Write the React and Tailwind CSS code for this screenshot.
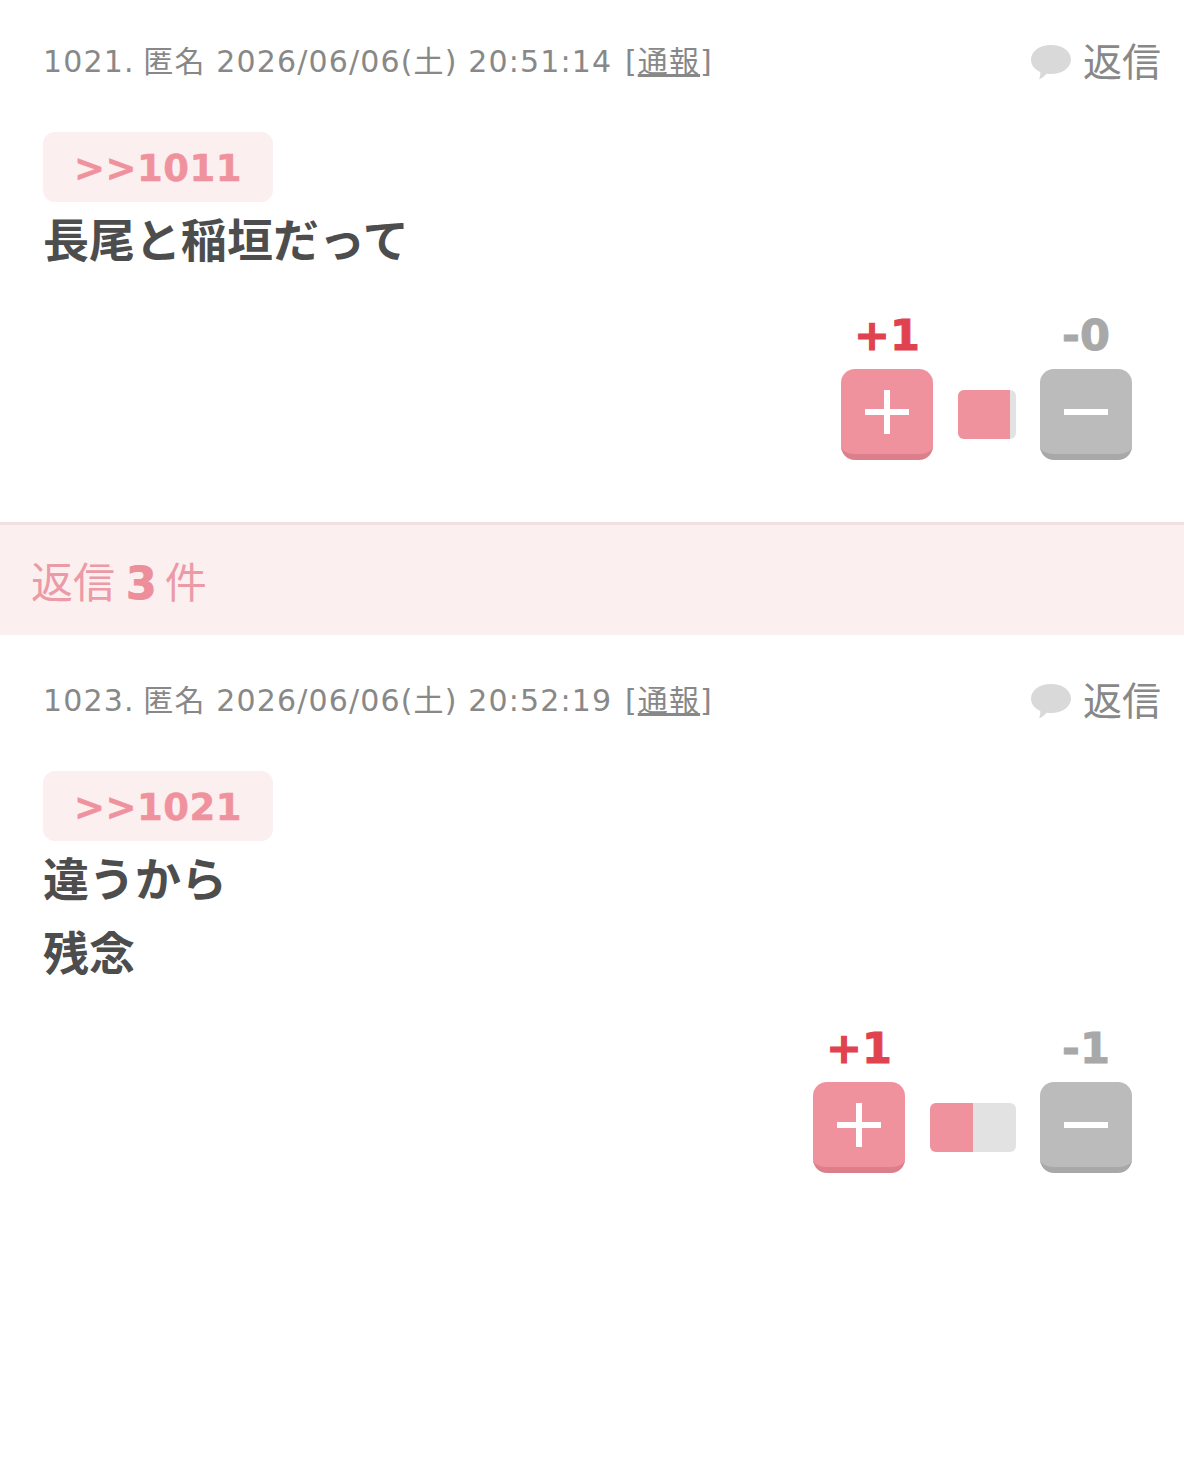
import React from 'react';

const font = { fontFamily: '"DejaVu Sans", "Noto Sans CJK JP", sans-serif' };

function Bubble() {
  return (
    <svg width="40" height="35" viewBox="0 0 40 35" className="shrink-0">
      <path d="M20 0C31 0 40 6 40 14.500C40 23 31 29 20 29C18.500 29 17 28.900 15.500 28.700C14 30.500 11.500 33 8 34.500C9 32 9.500 29.500 9.300 27C3.700 24.500 0 20 0 14.500C0 6 9 0 20 0Z" fill="#d9d9d9" />
    </svg>
  );
}

function VoteButton({ count, type }) {
  const plus = type === 'plus';
  return (
    <div className="flex flex-col items-center w-[92px]">
      <div className={`h-[48px] pb-[20px] flex items-center text-[43px] font-bold leading-none [-webkit-text-stroke:1px_currentColor] ${plus ? 'text-[#e0424f]' : 'text-[#a8a8a8]'}`}>
        {count}
      </div>
      <div className={`flex items-center justify-center w-[92px] h-[91px] rounded-[14px] border-b-[6px] ${plus ? 'bg-[#f0929d] border-[#dc7f8a]' : 'bg-[#bbbbbb] border-[#a8a8a8]'}`}>
        {plus ? (
          <svg width="44" height="44" viewBox="0 0 44 44"><path d="M19 0h6v19h19v6H25v19h-6V25H0v-6h19z" fill="#fff" /></svg>
        ) : (
          <svg width="44" height="44" viewBox="0 0 44 44"><path d="M0 19h44v6H0z" fill="#fff" /></svg>
        )}
      </div>
    </div>
  );
}

function Post({ no, date, anchor, lines, plus, minus, barWidth, fillWidth }) {
  return (
    <div className="pl-[44px] pr-[23px]">
      <div className="flex items-center justify-between h-[60px] text-[#888888]">
        <div className="-ml-[1px] text-[30px] tracking-[1.150px] leading-none whitespace-nowrap">
          <span className="-mr-[2px]">{no}.</span> 匿名 {date} <span className="ml-[2px]">[<span className="underline">通報</span>]</span>
        </div>
        <div className="flex items-center gap-[12px]">
          <Bubble />
          <span className="text-[39px] leading-none">返信</span>
        </div>
      </div>
      <div className="mt-[40px] -ml-[1px] pt-[3px] flex items-center justify-center w-[230px] h-[70px] rounded-[12px] bg-[#fbeff0] text-[#f0929d] text-[37px] font-bold tracking-[0.500px] leading-none [-webkit-text-stroke:0.5px_currentColor]">
        {anchor}
      </div>
      <div className="mt-[2px] -ml-[1px] text-[#4d4d4d] text-[46px] font-bold leading-[74px]">
        {lines.map((line) => (
          <div key={line}>{line}</div>
        ))}
      </div>
      <div className="flex justify-end items-end pr-[29px] mt-[43px]">
        <VoteButton count={plus} type="plus" />
        <div className="flex overflow-hidden h-[49px] rounded-[6px] bg-[#e2e2e2] ml-[25px] mr-[24px] mb-[21px]" style={{ width: barWidth }}>
          <div className="h-full bg-[#f0929d]" style={{ width: fillWidth }} />
        </div>
        <VoteButton count={minus} type="minus" />
      </div>
    </div>
  );
}

export default function App() {
  return (
    <div className="w-[1184px] h-[1465px] bg-white overflow-hidden" style={font}>
      <div className="pt-[32px]">
        <Post
          no="1021"
          date="2026/06/06(土) 20:51:14"
          anchor=">>1011"
          lines={['長尾と稲垣だって']}
          plus="+1"
          minus="-0"
          barWidth={58}
          fillWidth={52}
        />
      </div>
      <div className="mt-[62px] h-[113px] border-t-[3px] border-[#f2dfe4] bg-[#fbeff0] pl-[31px] pt-[7px] flex items-center gap-[11px] text-[#eb9aa6] text-[42px] leading-none">
        <span>返信</span>
        <b className="font-bold text-[44px] text-[#ec8f9b] [-webkit-text-stroke:1px_currentColor]">3</b>
        <span className="-ml-[3px]">件</span>
      </div>
      <div className="pt-[36px]">
        <Post
          no="1023"
          date="2026/06/06(土) 20:52:19"
          anchor=">>1021"
          lines={['違うから', '残念']}
          plus="+1"
          minus="-1"
          barWidth={86}
          fillWidth={43}
        />
      </div>
    </div>
  );
}
